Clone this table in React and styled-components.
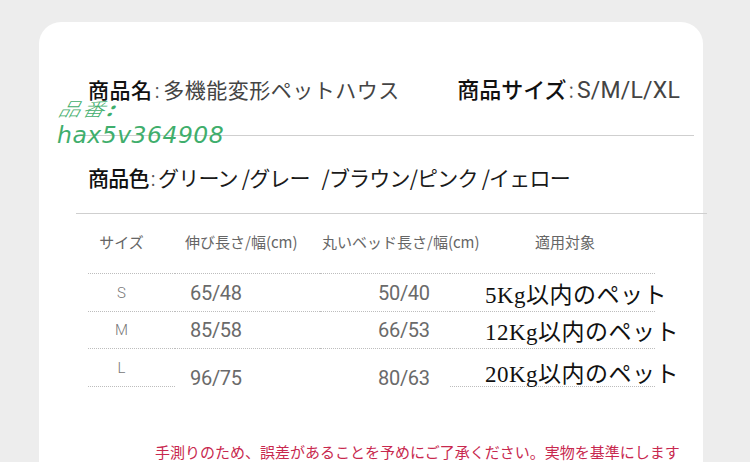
import React from "react";
import styled, { createGlobalStyle } from "styled-components";

const GlobalStyle = createGlobalStyle`
  html, body {
    margin: 0;
    padding: 0;
    background: #ededed;
    overflow: hidden;
  }
  body {
    font-family: "Noto Sans CJK JP", "Noto Sans", sans-serif;
  }
`;

const Page = styled.div`
  width: 750px;
  height: 462px;
  padding-top: 22px;
  box-sizing: border-box;
  overflow: hidden;
`;

const Card = styled.div`
  position: relative;
  margin-left: 39px;
  width: 664px;
  min-height: 520px;
  background: #fff;
  border-radius: 22px 22px 0 0;
  padding-top: 52px;
  box-sizing: border-box;
`;

const InfoRow = styled.div`
  display: flex;
  justify-content: space-between;
  align-items: center;
  padding: 0 23px 0 49px;
  height: 30px;
  margin-top: ${(p) => p.$top || "0"};
`;

const InfoText = styled.div`
  font-size: ${(p) => p.$size || "21px"};
  line-height: 30px;
  color: #222;
  white-space: nowrap;
  letter-spacing: ${(p) => p.$spacing || "0"};

  b {
    font-weight: 500;
    color: #111;
  }
  span {
    font-weight: 400;
    color: ${(p) => p.$valueColor || "#444"};
  }
  i {
    font-style: normal;
    font-weight: 300;
    color: #555;
    margin: 0 3px 0 2px;
  }
`;

const Latin = styled.span`
  font-family: Roboto, "Noto Sans", sans-serif;
  font-size: 23px;
  letter-spacing: 0.2px;
`;

const Divider = styled.div`
  height: 1px;
  background: #cfcfcf;
  margin: ${(p) => p.$margin};
`;

const Stamp = styled.div`
  position: absolute;
  left: 18px;
  top: 73px;
  color: #3fae6c;
  font-style: italic;
  font-family: "DejaVu Sans", "Noto Sans CJK JP", sans-serif;
  line-height: 1;
`;

const StampLabel = styled.div`
  font-family: "Noto Sans CJK JP", sans-serif;
  font-size: 22px;
  font-weight: 300;
  letter-spacing: 2px;
  transform: skewX(-14deg) scaleY(0.85);
  transform-origin: left bottom;
  height: 22px;
  span {
    font-weight: 700;
  }
`;

const StampCode = styled.div`
  font-size: 23.5px;
  font-weight: 400;
  margin-top: 7px;
  letter-spacing: 0.5px;
`;

const Table = styled.div`
  display: grid;
  grid-template-columns: 87px 145px 130px 205px;
  margin: 17px 0 0 49px;
  width: 567px;
`;

const HeadCell = styled.div`
  height: 42px;
  font-size: 15px;
  line-height: 22px;
  color: #666;
  white-space: nowrap;
  padding-left: ${(p) => p.$pad || "0"};
  text-align: ${(p) => (p.$center ? "center" : "left")};
  padding-right: ${(p) => (p.$center ? "20px" : "0")};
  border-bottom: 1px dotted #bdbdbd;
`;

const Cell = styled.div`
  height: ${(p) => p.$h}px;
  display: flex;
  align-items: center;
  justify-content: ${(p) => (p.$center ? "center" : "flex-start")};
  padding-left: ${(p) => p.$pad || "0"};
  padding-right: ${(p) => (p.$center ? "20px" : "0")};
  padding-top: ${(p) => p.$down || "0"};
  box-sizing: border-box;
  white-space: nowrap;
  border-bottom: ${(p) => (p.$noLine ? "1px solid transparent" : "1px dotted #bdbdbd")};
  margin-bottom: ${(p) => p.$sink || "0"};
`;

const SizeText = styled.span`
  font-family: Roboto, "Noto Sans", sans-serif;
  font-size: 15px;
  color: #777;
  font-weight: 300;
`;

const NumText = styled.span`
  font-family: Roboto, "Noto Sans", sans-serif;
  font-size: 20px;
  color: #6a6a6a;
  font-weight: 400;
  letter-spacing: -0.3px;
`;

const PetText = styled.span`
  font-family: "Liberation Serif", "Noto Sans CJK JP", serif;
  font-size: 23px;
  color: #111;
  letter-spacing: 0.5px;
`;

const Note = styled.div`
  margin-top: 55px;
  padding-left: 116px;
  font-size: 15px;
  line-height: 20px;
  color: #c8284e;
  white-space: nowrap;
`;

const rows = [
  { size: "S", a: "65/48", b: "50/40", pet: "5Kg以内のペット", h: 38 },
  { size: "M", a: "85/58", b: "66/53", pet: "12Kg以内のペット", h: 37, sink: "-8px", up: "0" },
  { size: "L", a: "96/75", b: "80/63", pet: "20Kg以内のペット", h: 38, down: "20px", petDown: "8px", last: true },
];

export default function App() {
  return (
    <Page>
      <GlobalStyle />
      <Card>
        <InfoRow>
          <InfoText $spacing="0.5px">
            <b>商品名</b>
            <i>:</i>
            <span>多機能変形ペットハウス</span>
          </InfoText>
          <InfoText $size="22px">
            <b>商品サイズ</b>
            <i>:</i>
            <span>
              <Latin>S/M/L/XL</Latin>
            </span>
          </InfoText>
        </InfoRow>
        <Divider $margin="31px 9px 0 36px" />
        <Stamp>
          <StampLabel>
            品番<span>:</span>
          </StampLabel>
          <StampCode>hax5v364908</StampCode>
        </Stamp>
        <InfoRow $top="26px">
          <InfoText $spacing="-0.8px" $valueColor="#1a1a1a">
            <b>商品色</b>
            <i>:</i>
            <span>グリーン /グレー&nbsp;&nbsp; /ブラウン/ピンク /イェロー</span>
          </InfoText>
        </InfoRow>
        <Divider $margin="21px -4px 0 37px" />
        <Table>
          <HeadCell $center>サイズ</HeadCell>
          <HeadCell $pad="10px">伸び長さ/幅(cm)</HeadCell>
          <HeadCell $pad="2px">丸いベッド長さ/幅(cm)</HeadCell>
          <HeadCell $pad="85px">適用対象</HeadCell>
          {rows.map((r) => (
            <React.Fragment key={r.size}>
              <Cell $h={r.h} $center>
                <SizeText>{r.size}</SizeText>
              </Cell>
              <Cell $h={r.h} $pad="15px" $down={r.down} $sink={r.sink} $noLine={r.last}>
                <NumText>{r.a}</NumText>
              </Cell>
              <Cell $h={r.h} $pad="58px" $down={r.down} $sink={r.sink} $noLine={r.last}>
                <NumText>{r.b}</NumText>
              </Cell>
              <Cell $h={r.h} $pad="35px" $down={r.petDown}>
                <PetText>{r.pet}</PetText>
              </Cell>
            </React.Fragment>
          ))}
        </Table>
        <Note>手測りのため、誤差があることを予めにご了承ください。実物を基準にします</Note>
      </Card>
    </Page>
  );
}
